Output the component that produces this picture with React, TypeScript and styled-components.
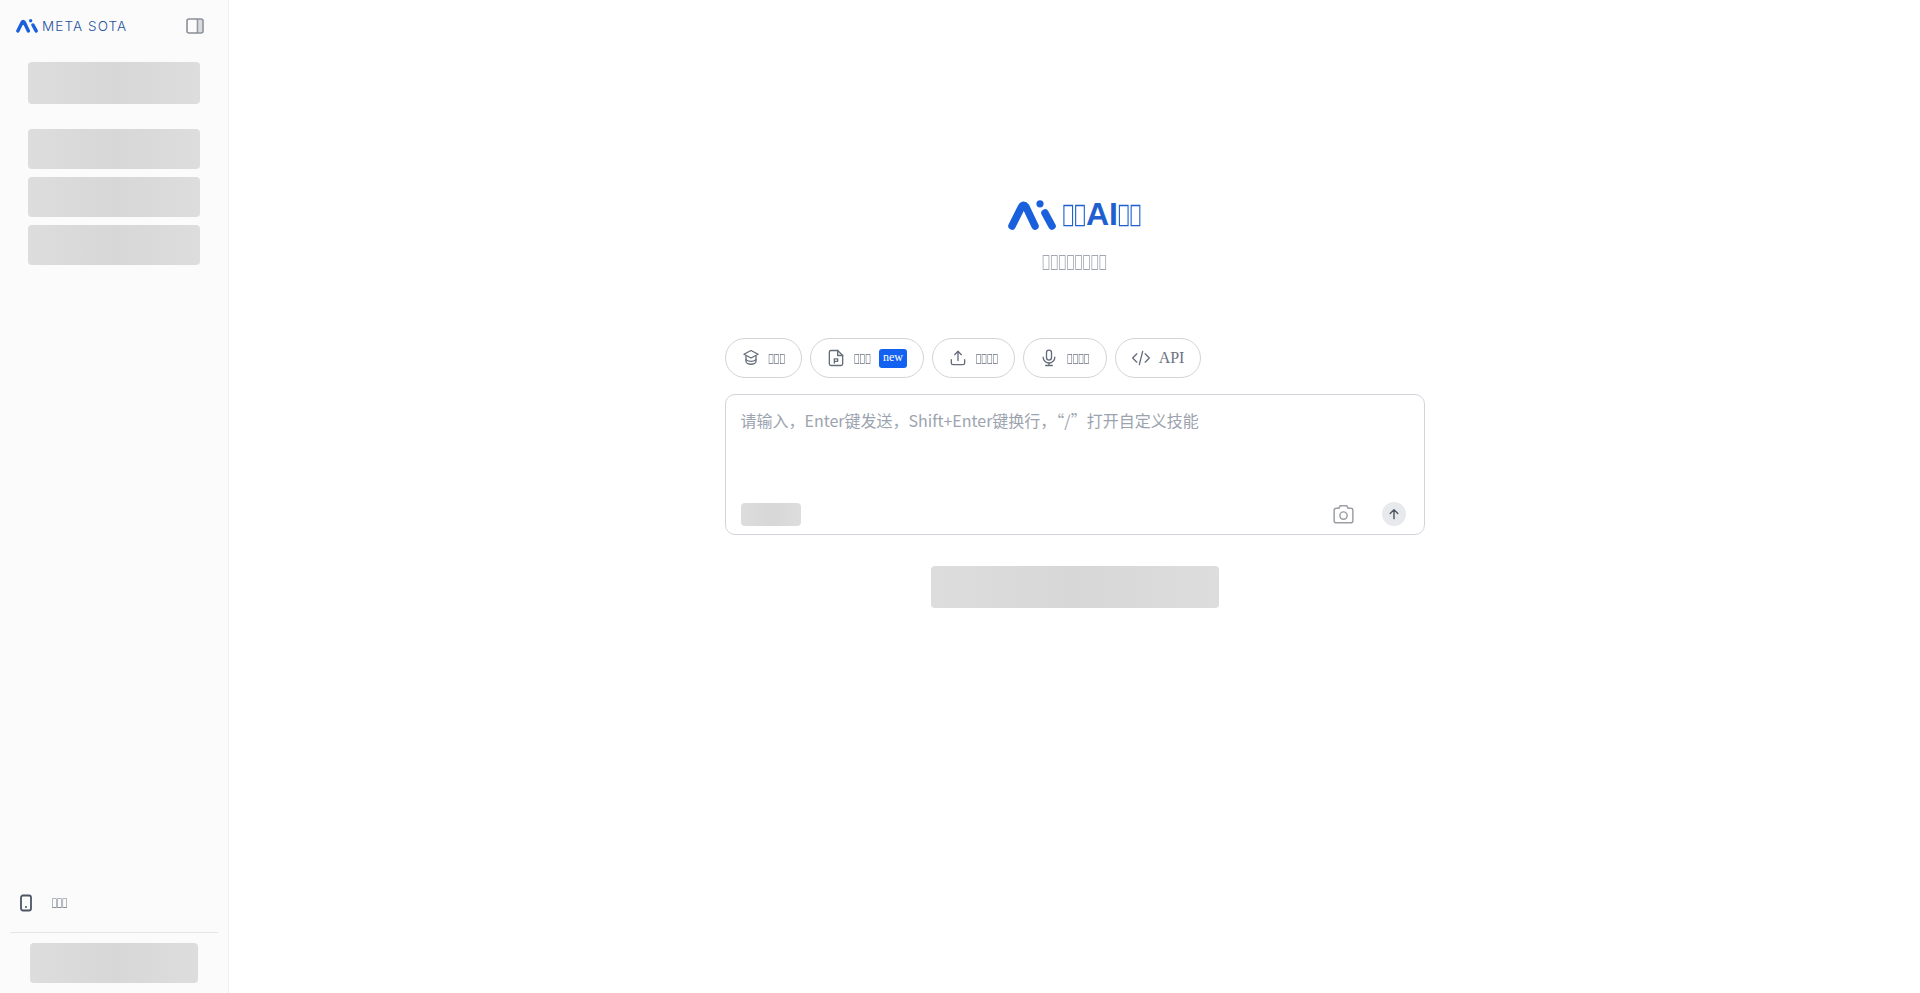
import type { ReactNode } from "react";
import styled, { createGlobalStyle } from "styled-components";

// the reference shows missing-glyph boxes for this copy, not readable words
const box = (count: number) => "\uE001".repeat(count);

const GlobalStyle = createGlobalStyle`
  html, body {
    margin: 0;
    height: 100%;
    background: #ffffff;
  }
  #root {
    height: 100%;
  }
  * {
    box-sizing: border-box;
  }
`;

const Layout = styled.div`
  display: flex;
  height: 993px;
  overflow: hidden;
  font-family: "Liberation Serif", serif;
`;

const Tofu = styled.span<{ $size: number }>`
  display: inline-block;
  font-family: "DejaVu Serif", serif;
  font-size: ${(p) => p.$size}px;
  font-weight: 400;
  line-height: 1;
  transform: scaleY(1.25);
`;

const Sidebar = styled.aside`
  display: flex;
  flex-direction: column;
  width: 229px;
  flex-shrink: 0;
  background: #fbfbfb;
  border-right: 1px solid #f0f0f0;
`;

const SidebarHead = styled.div`
  display: flex;
  align-items: center;
  justify-content: space-between;
  height: 52px;
  padding: 0 24px 0 16px;
`;

const Brand = styled.div`
  display: flex;
  align-items: center;
  gap: 4px;
`;

const BrandName = styled.span`
  font-family: Inter, sans-serif;
  font-size: 13.5px;
  font-weight: 300;
  letter-spacing: 1.1px;
  color: #27509f;
`;

const Skeleton = styled.div<{ $w: number; $h: number }>`
  width: ${(p) => p.$w}px;
  height: ${(p) => p.$h}px;
  flex-shrink: 0;
  border-radius: 4px;
  background: linear-gradient(90deg, #dddddd 0%, #d7d7d7 50%, #dddddd 100%);
  filter: blur(0.5px);
`;

const NewChat = styled.div`
  padding: 10px 0 0 28px;
`;

const HistoryList = styled.div`
  display: flex;
  flex-direction: column;
  gap: 8px;
  padding: 25px 0 0 28px;
`;

const SidebarFoot = styled.div`
  margin-top: auto;
  padding: 0 10px 10px;
`;

const AppLink = styled.div`
  display: flex;
  align-items: center;
  gap: 18px;
  height: 58px;
  padding: 0 0 2px 8px;
  color: #6b7280;
  border-bottom: 1px solid #e5e5e5;
  margin-bottom: 10px;
`;

const UserRow = styled.div`
  padding-left: 20px;
`;

const Main = styled.main`
  flex: 1;
  display: flex;
  flex-direction: column;
  align-items: center;
  padding-top: 198px;
`;

const Title = styled.div`
  display: flex;
  align-items: center;
  gap: 7px;
  height: 34px;
  font-family: "Liberation Sans", sans-serif;
  font-size: 32px;
  font-weight: 700;
  color: #1f5fd0;
`;

const TitleText = styled.span`
  display: flex;
  align-items: center;
  margin-top: -2px;
`;

const Subtitle = styled.div`
  display: flex;
  align-items: center;
  height: 24px;
  margin-top: 18px;
  color: #a3a8b0;
`;

const Pills = styled.div`
  display: flex;
  gap: 8px;
  width: 700px;
  margin-top: 64px;
`;

const Pill = styled.div`
  display: flex;
  align-items: center;
  gap: 8px;
  height: 40px;
  padding: 0 16px 0 15px;
  border: 1px solid #d4d4d8;
  border-radius: 20px;
  background: #ffffff;
  font-size: 16px;
  color: #6b7280;
`;

const NewTag = styled.span`
  padding: 0 4px;
  height: 19px;
  line-height: 17px;
  border-radius: 3px;
  background: #1261f0;
  color: #ffffff;
  font-size: 12px;
`;

const Composer = styled.div`
  display: flex;
  flex-direction: column;
  width: 700px;
  height: 141px;
  margin-top: 16px;
  padding: 13px 18px 4px 15px;
  border: 1px solid #d1d5db;
  border-radius: 10px;
`;

const Input = styled.textarea`
  flex: 1;
  border: 0;
  padding: 0;
  outline: 0;
  resize: none;
  background: transparent;
  font-family: "Noto Sans CJK SC", sans-serif;
  font-size: 16px;
  line-height: 24px;
  &::placeholder {
    color: #9ca3af;
  }
`;

const ComposerBar = styled.div`
  display: flex;
  align-items: center;
  height: 32px;
`;

const ComposerTools = styled.div`
  display: flex;
  align-items: center;
  gap: 26px;
  margin-left: auto;
`;

const SendButton = styled.div`
  display: flex;
  align-items: center;
  justify-content: center;
  width: 24px;
  height: 24px;
  border-radius: 50%;
  background: #e8e9ec;
`;

const Suggest = styled.div`
  margin-top: 31px;
`;

function Mark({ size }: { size: number }) {
  return (
    <svg width={size} height={size * 0.625} viewBox="0 0 48 30" fill="none">
      <path
        d="M4 26 L13.500 7 Q15.500 3.500 18 7 L27 26"
        stroke="#1a60dc"
        strokeWidth="7.500"
        strokeLinecap="round"
        strokeLinejoin="round"
      />
      <circle cx="32" cy="3.800" r="3.600" fill="#1a60dc" />
      <path d="M37 13 L44 26" stroke="#1a60dc" strokeWidth="7.500" strokeLinecap="round" />
    </svg>
  );
}

function PanelIcon() {
  return (
    <svg width="18" height="16" viewBox="0 0 18 16" fill="none" stroke="#8b8f98" strokeWidth="1.6">
      <rect x="1" y="1" width="16" height="14" rx="2" />
      <path d="M11.500 1v14" />
      <path d="M11.500 2h4.500v12h-4.500z" fill="#b9bcc2" stroke="none" opacity="0.5" />
    </svg>
  );
}

function Icon({ children }: { children: ReactNode }) {
  return (
    <svg width="20" height="20" viewBox="0 0 24 24" fill="none" stroke="#666d7a" strokeWidth="1.6" strokeLinecap="round" strokeLinejoin="round">
      {children}
    </svg>
  );
}

export default function App() {
  return (
    <Layout>
      <GlobalStyle />
      <Sidebar>
        <SidebarHead>
          <Brand>
            <Mark size={22} />
            <BrandName>META SOTA</BrandName>
          </Brand>
          <PanelIcon />
        </SidebarHead>
        <NewChat>
          <Skeleton $w={172} $h={42} />
        </NewChat>
        <HistoryList>
          <Skeleton $w={172} $h={40} />
          <Skeleton $w={172} $h={40} />
          <Skeleton $w={172} $h={40} />
        </HistoryList>
        <SidebarFoot>
          <AppLink>
            <svg width="16" height="18" viewBox="0 0 16 18" fill="none">
              <rect x="3" y="1.500" width="10" height="15" rx="2" stroke="#4b5563" strokeWidth="1.8" />
              <circle cx="8" cy="13" r="1" fill="#4b5563" />
            </svg>
            <Tofu $size={8.500}>{box(3)}</Tofu>
          </AppLink>
          <UserRow>
            <Skeleton $w={168} $h={40} />
          </UserRow>
        </SidebarFoot>
      </Sidebar>
      <Main>
        <Title>
          <Mark size={48} />
          <TitleText>
            <Tofu $size={19.500}>{box(2)}</Tofu>AI<Tofu $size={19.500}>{box(2)}</Tofu>
          </TitleText>
        </Title>
        <Subtitle>
          <Tofu $size={13.500}>{box(8)}</Tofu>
        </Subtitle>
        <Pills>
          <Pill>
            <Icon>
              <path d="M12 3 3.500 7.500 12 12l8.500-4.500z" />
              <path d="M6 10v6c0 2 3 3.500 6 3.500s6-1.500 6-3.500v-6" />
              <path d="M6 14c2 1.500 4 2 6 2s4-.5 6-2" />
            </Icon>
            <Tofu $size={9.300}>{box(3)}</Tofu>
          </Pill>
          <Pill>
            <Icon>
              <path d="M14 3H6a2 2 0 0 0-2 2v14a2 2 0 0 0 2 2h12a2 2 0 0 0 2-2V9z" />
              <path d="M14 3v6h6" />
              <path d="M10 18v-5h4v3h-3" />
            </Icon>
            <Tofu $size={9.300}>{box(3)}</Tofu>
            <NewTag>new</NewTag>
          </Pill>
          <Pill>
            <Icon>
              <path d="M12 15V4" />
              <path d="m8 8 4-4 4 4" />
              <path d="M4 14v4a2 2 0 0 0 2 2h12a2 2 0 0 0 2-2v-4" />
            </Icon>
            <Tofu $size={9.300}>{box(4)}</Tofu>
          </Pill>
          <Pill>
            <Icon>
              <rect x="9" y="2.500" width="6" height="12" rx="3" />
              <path d="M5 11a7 7 0 0 0 14 0" />
              <path d="M12 18v3M8 21h8" />
            </Icon>
            <Tofu $size={9.300}>{box(4)}</Tofu>
          </Pill>
          <Pill>
            <Icon>
              <path d="m7 7-5 5 5 5M17 7l5 5-5 5M14 4l-4 16" />
            </Icon>
            <span>API</span>
          </Pill>
        </Pills>
        <Composer>
          <Input placeholder="请输入，Enter键发送，Shift+Enter键换行，“/”打开自定义技能" />
          <ComposerBar>
            <Skeleton $w={60} $h={23} />
            <ComposerTools>
              <svg width="25" height="25" viewBox="0 0 24 24" fill="none" stroke="#9a9da3" strokeWidth="1.4" strokeLinejoin="round">
                <path d="M3 8a2 2 0 0 1 2-2h2.500l1.500-2.500h6L16.500 6H19a2 2 0 0 1 2 2v10a2 2 0 0 1-2 2H5a2 2 0 0 1-2-2z" />
                <circle cx="12" cy="13" r="3.500" />
              </svg>
              <SendButton>
                <svg width="14" height="14" viewBox="0 0 24 24" fill="none" stroke="#4b5563" strokeWidth="2.400" strokeLinecap="round" strokeLinejoin="round">
                  <path d="M12 20V5M5.500 11 12 4.500 18.500 11" />
                </svg>
              </SendButton>
            </ComposerTools>
          </ComposerBar>
        </Composer>
        <Suggest>
          <Skeleton $w={288} $h={42} />
        </Suggest>
      </Main>
    </Layout>
  );
}
